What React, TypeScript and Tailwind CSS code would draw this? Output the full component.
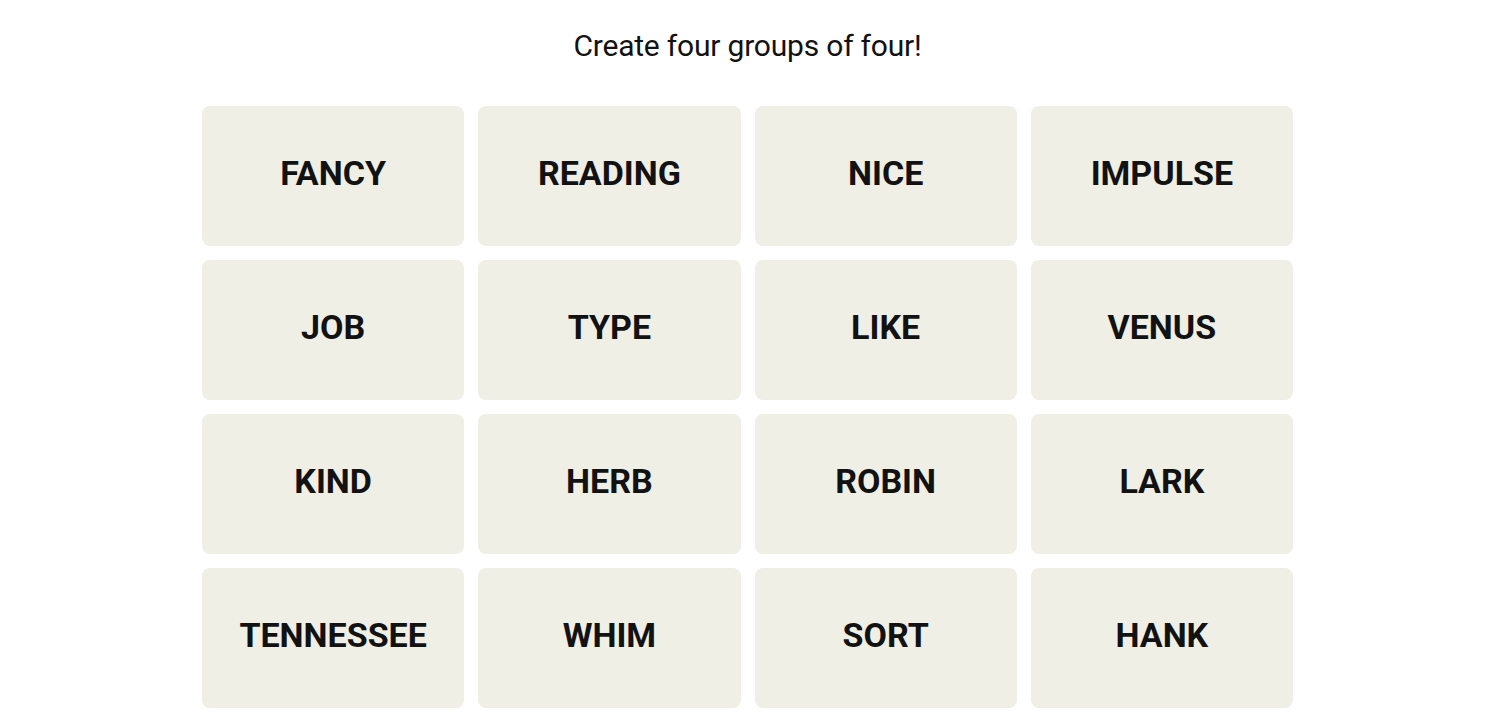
import React from "react";

const words = [
  "FANCY", "READING", "NICE", "IMPULSE",
  "JOB", "TYPE", "LIKE", "VENUS",
  "KIND", "HERB", "ROBIN", "LARK",
  "TENNESSEE", "WHIM", "SORT", "HANK",
];

export default function App() {
  return (
    <div className="min-h-[725px] w-full bg-white flex flex-col items-center pr-[5px]" style={{ fontFamily: "Roboto, 'Liberation Sans', sans-serif" }}>
      <h1 className="mt-[28px] text-[30px] leading-[36px] font-normal text-[#121212] tracking-[-0.2px]">
        Create four groups of four!
      </h1>
      <div className="mt-[42px] grid grid-cols-4 gap-x-[14px] gap-y-[14px] w-[1091px]">
        {words.map((w) => (
          <div
            key={w}
            className="h-[140px] rounded-[8px] bg-[#efefe6] flex items-center justify-center pb-[6px]"
          >
            <span className="text-[34px] font-bold text-[#121212] tracking-[0px] leading-none">{w}</span>
          </div>
        ))}
      </div>
    </div>
  );
}
